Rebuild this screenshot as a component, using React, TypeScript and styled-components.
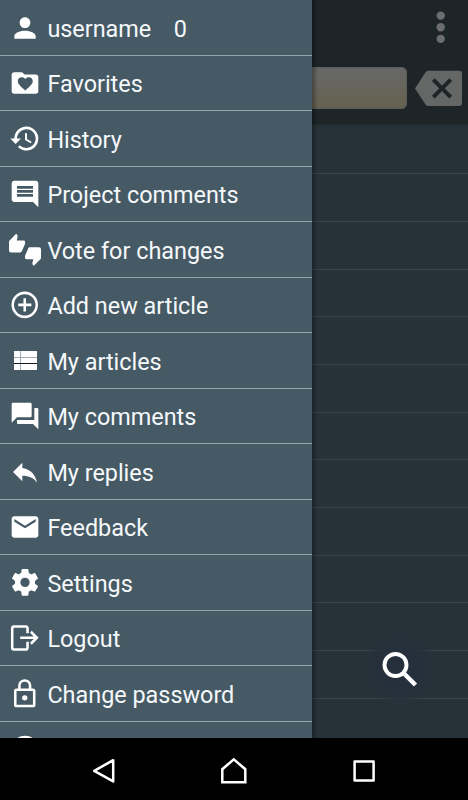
import React from "react";
import styled, { createGlobalStyle } from "styled-components";
import { MdPerson, MdComment, MdQuestionAnswer, MdReply, MdEmail, MdHelp } from "react-icons/md";

const GlobalStyle = createGlobalStyle`
  * { box-sizing: border-box; }
  body { margin: 0; background: #000; }
`;

const Screen = styled.div`
  width: 468px;
  height: 800px;
  display: flex;
  flex-direction: column;
  overflow: hidden;
  font-family: Roboto, sans-serif;
`;

const Content = styled.div`
  position: relative;
  height: 738px;
  flex: none;
  overflow: hidden;
  background: #273238;
`;

const AppBar = styled.header`
  height: 123px;
  background: #1e2528;
  box-shadow: 0 1px 2px #171c1e;
`;

const TitleRow = styled.div`
  height: 67px;
  display: flex;
  justify-content: flex-end;
  padding: 11px 21px 0 0;
`;

const SearchRow = styled.div`
  display: flex;
  justify-content: flex-end;
  align-items: center;
  gap: 8px;
  height: 42px;
  padding-right: 6px;
`;

const SearchField = styled.div`
  width: 387px;
  height: 42px;
  border-radius: 6px;
  background: linear-gradient(#676767 10%, #666355 75%, #65614d);
  box-shadow: inset 0 0 1px 1px #5e5e5a;
`;

const List = styled.div``;

const ListRow = styled.div<{ $height: number }>`
  height: ${(p) => p.$height}px;
  border-bottom: 1px solid #3a4347;
`;

const Drawer = styled.nav`
  position: absolute;
  top: 0;
  left: 0;
  width: 312px;
  height: 738px;
  overflow: hidden;
  background: #465a65;
`;

const DrawerShade = styled.div`
  position: absolute;
  top: 0;
  left: 312px;
  width: 6px;
  height: 738px;
  background: linear-gradient(90deg, rgba(0, 0, 0, 0.32), transparent);
`;

const Item = styled.div<{ $compact: boolean }>`
  display: flex;
  align-items: flex-start;
  height: ${(p) => (p.$compact ? 55 : 56)}px;
  padding: ${(p) => (p.$compact ? 11 : 12)}px 0 0 9px;
  border-bottom: 1px solid #92a3a9;
  color: #fff;

  > svg {
    flex: none;
    width: 32px;
    height: 32px;
    overflow: visible;
  }
`;

const Label = styled.span`
  margin: 3px 0 0 6.4px;
  font-size: 23.4px;
  line-height: 28px;
  white-space: nowrap;
  color: #f5f8fa;
`;

const Count = styled(Label)`
  margin-left: 22.5px;
`;

const SearchButton = styled.div`
  position: absolute;
  left: 364px;
  top: 633px;
  width: 72px;
  height: 72px;
  border-radius: 50%;
  background: radial-gradient(circle closest-side, #26303c 60%, rgba(38, 48, 60, 0.6) 85%, rgba(38, 48, 60, 0));
`;

const SystemBar = styled.footer`
  height: 62px;
  display: grid;
  grid-template-columns: 39px 130px 130px 130px 39px;
  align-items: center;
  justify-items: center;
  padding-top: 4px;
  background: #000;

  > svg:first-child {
    grid-column: 2;
  }
`;

const Glyph = ({ d, rise = 0 }: { d: string; rise?: number }) => (
  <svg viewBox={`0 ${rise} 24 24`} fill="currentColor" fillRule="evenodd">
    <path d={d} />
  </svg>
);

const Favorites = () => (
  <Glyph d="M4 4H9.8L11.7 5.7H20A2 2 0 0 1 22 7.7V18A2 2 0 0 1 20 20H4A2 2 0 0 1 2 18V6A2 2 0 0 1 4 4ZM12.2 17.6L13 16.8C15.9 14.2 17.8 12.6 17.8 10.6C17.8 8.9 16.5 7.7 14.9 7.7C13.8 7.7 12.8 8.2 12.2 9C11.6 8.2 10.6 7.7 9.5 7.7C7.9 7.7 6.6 8.9 6.6 10.6C6.6 12.6 8.5 14.2 11.4 16.8Z" />
);

const History = () => (
  <Glyph rise={0.3} d="M13.5 8H12V13L16.28 15.54L17 14.33L13.5 12.25V8ZM13 3A9 9 0 0 0 4 12H1L4.96 16.03L9 12H6A7 7 0 1 1 8.06 16.94L6.64 18.36A9 9 0 1 0 13 3Z" />
);

const Votes = () => (
  <Glyph rise={0.6} d="M22.5 10.5H15.75C15.13 10.5 14.6 10.88 14.37 11.41L12.11 16.7C12.04 16.87 12 17.06 12 17.25V18.5A1 1 0 0 0 13 19.5H18.18L17.5 22.68V22.92C17.5 23.23 17.63 23.5 17.83 23.72L18.62 24.5L23.56 19.56C23.83 19.29 24 18.91 24 18.5V12A1.5 1.5 0 0 0 22.5 10.5ZM12 6.5A1 1 0 0 0 11 5.5H5.82L6.5 2.32V2.09C6.5 1.78 6.37 1.5 6.17 1.29L5.38 .5L.44 5.44C.17 5.71 0 6.09 0 6.5V13A1.5 1.5 0 0 0 1.5 14.5H8.25C8.87 14.5 9.4 14.11 9.63 13.59L11.89 8.3C11.96 8.13 12 7.94 12 7.75V6.5Z" />
);

const AddCircle = () => (
  <svg viewBox="0 0 24 24" fill="none" stroke="currentColor" strokeWidth="1.9">
    <circle cx="11.8" cy="11.9" r="9" />
    <path d="M11.8 7V16.9M6.9 11.9H16.8" />
  </svg>
);

const Articles = () => (
  <svg viewBox="0 0 32 32" fill="currentColor">
    <path d="M5 6H28V25H5Z" fill="#a3adb3" />
    <path d="M5 18H28V19H5Z" fill="#10191e" />
    <path d="M5 6H11V12H5ZM12 6H28V12H12ZM5 13H11V18H5ZM12 13H28V18H12ZM5 19H11V25H5ZM12 19H28V25H12Z" />
  </svg>
);

const Settings = () => (
  <Glyph rise={0.5} d="M12 15.5A3.5 3.5 0 0 1 8.5 12A3.5 3.5 0 0 1 12 8.5A3.5 3.5 0 0 1 15.5 12A3.5 3.5 0 0 1 12 15.5ZM19.43 12.97C19.47 12.65 19.5 12.33 19.5 12C19.5 11.67 19.47 11.34 19.43 11L21.54 9.37C21.73 9.22 21.78 8.95 21.66 8.73L19.66 5.27C19.54 5.05 19.27 4.96 19.05 5.05L16.56 6.05C16.04 5.66 15.5 5.32 14.87 5.07L14.5 2.42C14.46 2.18 14.25 2 14 2H10C9.75 2 9.54 2.18 9.5 2.42L9.13 5.07C8.5 5.32 7.96 5.66 7.44 6.05L4.95 5.05C4.73 4.96 4.46 5.05 4.34 5.27L2.34 8.73C2.21 8.95 2.27 9.22 2.46 9.37L4.57 11C4.53 11.34 4.5 11.67 4.5 12C4.5 12.33 4.53 12.65 4.57 12.97L2.46 14.63C2.27 14.78 2.21 15.05 2.34 15.27L4.34 18.73C4.46 18.95 4.73 19.03 4.95 18.95L7.44 17.94C7.96 18.34 8.5 18.68 9.13 18.93L9.5 21.58C9.54 21.82 9.75 22 10 22H14C14.25 22 14.46 21.82 14.5 21.58L14.87 18.93C15.5 18.67 16.04 18.34 16.56 17.94L19.05 18.95C19.27 19.03 19.54 18.95 19.66 18.73L21.66 15.27C21.78 15.05 21.73 14.78 21.54 14.63L19.43 12.97Z" />
);

const Logout = () => (
  <svg viewBox="0 0 24 24" fill="none" stroke="currentColor" strokeWidth="1.9">
    <path d="M13.9 8.5V4.6A1.2 1.2 0 0 0 12.7 3.4H3.6A1.2 1.2 0 0 0 2.4 4.6V19.4A1.2 1.2 0 0 0 3.6 20.6H12.7A1.2 1.2 0 0 0 13.9 19.4V14.9" />
    <path d="M8.4 11.8H20.5M16.4 7.3L20.9 11.8L16.4 16.3" />
  </svg>
);

const Lock = () => (
  <svg viewBox="0 0 24 24" fill="none" stroke="currentColor" strokeWidth="1.9">
    <rect x="4.7" y="8.8" width="14.2" height="12.2" rx="1" />
    <path d="M7.8 8.8V5.8A4 4 0 0 1 15.8 5.8V8.8" />
    <circle cx="11.8" cy="14.9" r="2" fill="currentColor" stroke="none" />
  </svg>
);

const items: { icon: React.ReactNode; label?: string; count?: number }[] = [
  { icon: <MdPerson />, label: "username", count: 0 },
  { icon: <Favorites />, label: "Favorites" },
  { icon: <History />, label: "History" },
  { icon: <MdComment />, label: "Project comments" },
  { icon: <Votes />, label: "Vote for changes" },
  { icon: <AddCircle />, label: "Add new article" },
  { icon: <Articles />, label: "My articles" },
  { icon: <MdQuestionAnswer />, label: "My comments" },
  { icon: <MdReply />, label: "My replies" },
  { icon: <MdEmail />, label: "Feedback" },
  { icon: <Settings />, label: "Settings" },
  { icon: <Logout />, label: "Logout" },
  { icon: <Lock />, label: "Change password" },
  { icon: <MdHelp /> },
];

const listRows = [51, 48, 48, 47, 48, 48, 47, 48, 48, 47, 48, 48];

export default function App() {
  return (
    <Screen>
      <GlobalStyle />
      <Content>
        <AppBar>
          <TitleRow>
            <svg width="13" height="34" fill="#6b6d6e">
              <circle cx="6.7" cy="4.6" r="4.2" />
              <circle cx="6.7" cy="16.2" r="4.2" />
              <circle cx="6.7" cy="27.9" r="4.2" />
            </svg>
          </TitleRow>
          <SearchRow>
            <SearchField />
            <svg width="47" height="36" viewBox="0 0 47 36">
              <path d="M13 .7H44A3 3 0 0 1 47 3.7V33A3 3 0 0 1 44 36H13Q11.5 36 10.5 34.5L0 18.4L10.5 2.2Q11.5 .7 13 .7Z" fill="#656666" />
              <path d="M18.3 9.7L35.7 27.1M35.7 9.7L18.3 27.1" stroke="#1e2528" strokeWidth="4" />
            </svg>
          </SearchRow>
        </AppBar>
        <List>
          {listRows.map((height, i) => (
            <ListRow key={i} $height={height} />
          ))}
        </List>
        <SearchButton>
          <svg width="72" height="72" fill="none" stroke="#fff">
            <circle cx="31.5" cy="32" r="11" strokeWidth="3.9" />
            <path d="M40 40.5L51.5 52" strokeWidth="4.4" />
          </svg>
        </SearchButton>
        <DrawerShade />
        <Drawer>
          {items.map((item, i) => (
            <Item key={i} $compact={i % 2 === 1}>
              {item.icon}
              {item.label && <Label>{item.label}</Label>}
              {item.count !== undefined && <Count>{item.count}</Count>}
            </Item>
          ))}
        </Drawer>
      </Content>
      <SystemBar>
        <svg width="28" height="28" fill="none" stroke="#fff" strokeWidth="2.5" strokeLinejoin="round">
          <path d="M4.2 13.8L23.2 3.2V24.4Z" />
        </svg>
        <svg width="30" height="30" fill="none" stroke="#fff" strokeWidth="2.5">
          <path d="M3.3 26.2V13.2L14.8 3.4L26.3 13.2V26.2Z" />
        </svg>
        <svg width="26" height="26" fill="none" stroke="#fff" strokeWidth="2.5" strokeLinejoin="round">
          <rect x="3.6" y="3.4" width="19" height="19" />
        </svg>
      </SystemBar>
    </Screen>
  );
}
